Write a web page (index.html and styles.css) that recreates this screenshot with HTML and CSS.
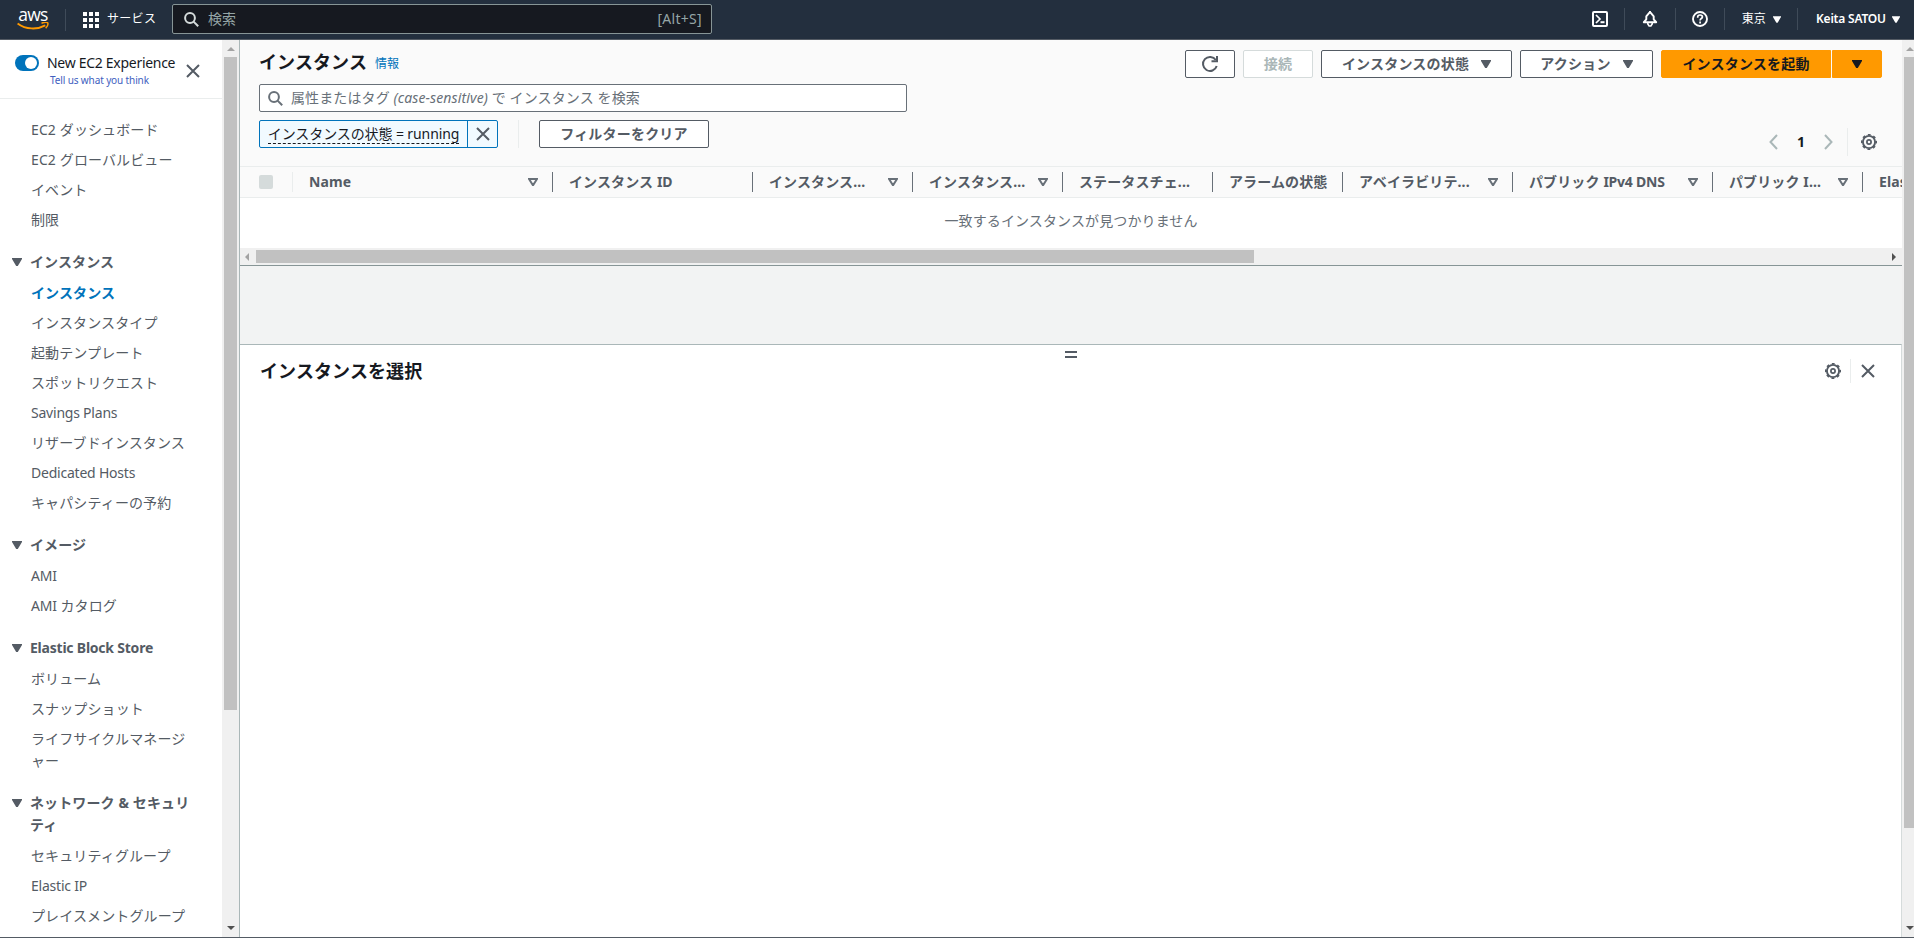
FILE: index.html
```html
<!DOCTYPE html>
<html lang="ja">
<head>
<meta charset="utf-8">
<title>インスタンス | EC2</title>
<link rel="stylesheet" href="styles.css">
</head>
<body>
<svg class="defs" width="0" height="0">
  <symbol id="gear" viewBox="0 0 16 16"><g fill="none" stroke="currentColor" stroke-width="1.9"><circle cx="8" cy="8" r="6.1"/><circle cx="8" cy="8" r="2.1" stroke-width="1.7"/></g><circle cx="8" cy="8" r="7.3" fill="none" stroke="currentColor" stroke-width="1.5" stroke-dasharray="2.87 2.87" stroke-dashoffset="1.43"/></symbol>
  <symbol id="close" viewBox="0 0 14 14"><path d="M1 1l12 12M13 1L1 13" fill="none" stroke="currentColor" stroke-width="2"/></symbol>
  <symbol id="search" viewBox="0 0 15 15"><circle cx="6" cy="6" r="4.9" fill="none" stroke="currentColor" stroke-width="2"/><path d="M9.6 9.6l4.6 4.6" stroke="currentColor" stroke-width="2"/></symbol>
  <symbol id="down" viewBox="0 0 10 8"><path d="M0 0h10v1L5.8 8H4.2L0 1z" fill="currentColor"/></symbol>
  <symbol id="filter" viewBox="0 0 10 8"><path d="M1 1h8L5.2 7h-.4z" fill="none" stroke="currentColor" stroke-width="2"/></symbol>
</svg>
<header class="topbar">
  <a class="logo">
    <span class="logo-text">aws</span>
    <svg class="smile" viewBox="0 0 32 9"><path d="M.6 1.4C9 7.6 20 7.900 28.300 3.300" fill="none" stroke="#f90" stroke-width="1.9"/><path d="M24.500 1.200C27 .2 30 .1 30.700.8c.5 1-.3 3.600-2 5.400" fill="none" stroke="#f90" stroke-width="1.500"/></svg>
  </a>
  <i class="sep"></i>
  <a class="services"><svg width="16" height="16" viewBox="0 0 16 16"><path fill="#fff" d="M0 0h4v4H0zM6 0h4v4H6zM12 0h4v4h-4zM0 6h4v4H0zM6 6h4v4H6zM12 6h4v4h-4zM0 12h4v4H0zM6 12h4v4H6zM12 12h4v4h-4z"/></svg><span>サービス</span></a>
  <div class="topsearch"><svg width="15" height="15"><use href="#search"/></svg><span class="ph">検索</span><span class="key">[Alt+S]</span></div>
  <div class="topright">
    <span class="ticon shell"><svg width="16" height="16" viewBox="0 0 16 16" fill="none" stroke="#fff" stroke-width="2"><rect x="1" y="1" width="14" height="14" rx="1"/><path d="M4 4l4 4-4 4" stroke-width="1.700"/><path d="M8.500 11.200h4"/></svg></span>
    <i class="sep"></i>
    <span class="ticon bell"><svg width="16" height="16" viewBox="0 0 16 16" fill="none" stroke="#fff" stroke-width="1.900"><path d="M7.200 1.800L4.300 5.300v3L1.800 11.200h12.400L11.700 8.300v-3L8.800 1.800z" stroke-linejoin="round"/><path d="M8 0v2"/><path d="M5.800 12v1l1.300 2h1.800l1.300-2v-1" stroke-width="1.600"/></svg></span>
    <i class="sep"></i>
    <span class="ticon help"><svg width="16" height="16" viewBox="0 0 16 16" fill="none" stroke="#fff" stroke-width="1.900"><circle cx="8" cy="8" r="7"/><path d="M5.700 6.700V5.900C5.700 4.700 6.700 4 8 4s2.400.8 2.400 2c0 1.600-2.300 1.500-2.300 3.400M8.100 10.500v2" stroke-width="1.700"/></svg></span>
    <i class="sep"></i>
    <span class="region">東京<svg width="8" height="7"><use href="#down"/></svg></span>
    <i class="sep"></i>
    <span class="user"><b>Keita SATOU</b><svg width="8" height="7"><use href="#down"/></svg></span>
  </div>
</header>
<div class="shell-body">
  <aside class="side">
    <div class="side-content">
      <div class="exp">
        <span class="toggle"></span>
        <div class="exp-text"><span class="exp-title">New EC2 Experience</span><a class="exp-link">Tell us what you think</a></div>
        <svg class="exp-close" width="14" height="14"><use href="#close"/></svg>
      </div>
      <nav class="nav">
        <ul><li>EC2 ダッシュボード</li><li>EC2 グローバルビュー</li><li>イベント</li><li>制限</li></ul>
        <h3><svg width="10" height="8"><use href="#down"/></svg><span>インスタンス</span></h3>
        <ul><li class="on">インスタンス</li><li>インスタンスタイプ</li><li>起動テンプレート</li><li>スポットリクエスト</li><li class="latin">Savings Plans</li><li>リザーブドインスタンス</li><li class="latin">Dedicated Hosts</li><li>キャパシティーの予約</li></ul>
        <h3><svg width="10" height="8"><use href="#down"/></svg><span>イメージ</span></h3>
        <ul><li class="latin">AMI</li><li><span class="latin">AMI</span> カタログ</li></ul>
        <h3><svg width="10" height="8"><use href="#down"/></svg><span class="latin">Elastic Block Store</span></h3>
        <ul><li>ボリューム</li><li>スナップショット</li><li>ライフサイクルマネージ<br>ャー</li></ul>
        <h3><svg width="10" height="8"><use href="#down"/></svg><span>ネットワーク &amp; セキュリ<br>ティ</span></h3>
        <ul><li>セキュリティグループ</li><li class="latin">Elastic IP</li><li>プレイスメントグループ</li></ul>
      </nav>
    </div>
    <div class="vbar"><i class="up"></i><i class="thumb left-thumb"></i><i class="dn"></i></div>
  </aside>
  <main class="main">
    <section class="panel">
      <div class="title-row">
        <h1>インスタンス</h1><a class="info">情報</a>
        <div class="actions">
          <button class="btn refresh"><svg width="18" height="18" viewBox="0 0 18 18" fill="none" stroke="currentColor" stroke-width="2"><path d="M15.700 11A7 7 0 1 1 14.800 5"/><path d="M16 1v5.200h-5.500"/></svg></button>
          <button class="btn off">接続</button>
          <button class="btn state">インスタンスの状態<svg width="10" height="8"><use href="#down"/></svg></button>
          <button class="btn act">アクション<svg width="10" height="8"><use href="#down"/></svg></button>
          <div class="split"><button class="btn launch">インスタンスを起動</button><button class="btn more"><svg width="10" height="8"><use href="#down"/></svg></button></div>
        </div>
      </div>
      <div class="search"><svg width="15" height="15"><use href="#search"/></svg><span>属性またはタグ <em>(case-sensitive)</em> で インスタンス を検索</span></div>
      <div class="filter-row">
        <div class="chip"><div class="chip-label"><span>インスタンスの状態 = running</span></div><div class="chip-x"><svg width="14" height="14"><use href="#close"/></svg></div></div>
        <i class="rule"></i>
        <button class="btn clear">フィルターをクリア</button>
        <div class="pager"><svg width="9" height="16" viewBox="0 0 9 16"><path d="M8 1L1.500 8 8 15" fill="none" stroke="#aab7b8" stroke-width="2"/></svg><b>1</b><svg width="9" height="16" viewBox="0 0 9 16"><path d="M1 1l6.500 7L1 15" fill="none" stroke="#aab7b8" stroke-width="2"/></svg><i class="rule"></i><svg class="gear" width="16" height="16"><use href="#gear"/></svg></div>
      </div>
      <div class="thead">
        <div class="th check"><i></i></div>
        <div class="th name"><span>Name</span><svg width="10" height="8"><use href="#filter"/></svg></div>
        <div class="th w200"><span>インスタンス <span class="latin">ID</span></span></div>
        <div class="th w160"><span>インスタンス...</span><svg width="10" height="8"><use href="#filter"/></svg></div>
        <div class="th w150"><span>インスタンス...</span><svg width="10" height="8"><use href="#filter"/></svg></div>
        <div class="th w150"><span>ステータスチェ...</span></div>
        <div class="th w130"><span>アラームの状態</span></div>
        <div class="th w170"><span>アベイラビリテ...</span><svg width="10" height="8"><use href="#filter"/></svg></div>
        <div class="th w200"><span>パブリック <span class="latin">IPv4 DNS</span></span><svg width="10" height="8"><use href="#filter"/></svg></div>
        <div class="th w150"><span>パブリック I...</span><svg width="10" height="8"><use href="#filter"/></svg></div>
        <div class="th last"><span>Elastic IP</span></div>
      </div>
      <div class="empty">一致するインスタンスが見つかりません</div>
      <div class="hbar"><i class="lt"></i><i class="hthumb"></i><i class="rt"></i></div>
    </section>
    <div class="gap"></div>
    <section class="detail">
      <i class="grip"></i>
      <div class="detail-head"><h2>インスタンスを選択</h2><svg width="16" height="16"><use href="#gear"/></svg><i class="rule"></i><svg width="14" height="14"><use href="#close"/></svg></div>
    </section>
  </main>
  <div class="vbar page-bar"><i class="up"></i><i class="thumb page-thumb"></i><i class="dn"></i></div>
</div>
</body>
</html>
```
FILE: styles.css
```css
* { box-sizing: border-box; }
body { margin: 0; width: 1914px; height: 938px; overflow: hidden; display: flex; flex-direction: column; font: 14px/22px "Noto Sans", "Noto Sans CJK JP", sans-serif; letter-spacing: .12px; color: #545b64; background: #fff; border-bottom: 1px solid #545b64; }
.defs { position: absolute; }
svg { display: block; flex: none; }
h1, h2, h3, ul { margin: 0; padding: 0; }
ul { list-style: none; }
i { flex: none; }
.latin { letter-spacing: -.22px; }

.topbar { flex: none; height: 40px; background: #232f3e; border-bottom: 1px solid #545b64; display: flex; align-items: center; color: #fff; font-size: 12px; }
.topbar .sep { width: 1px; height: 22px; background: #3f4b59; }
.logo { width: 32px; height: 22px; margin: 0 16px 0 17px; display: flex; flex-direction: column; align-items: center; }
.logo-text { font: 500 17.5px/11px "Open Sans", sans-serif; letter-spacing: -.7px; height: 13px; }
.smile { width: 32px; height: 9px; }
.services { display: flex; align-items: center; gap: 8px; margin-left: 17px; width: 89px; white-space: nowrap; letter-spacing: .3px; }
.services span { margin-top: -2px; }
.topsearch { width: 540px; height: 30px; margin-top: -1px; border: 1px solid #879596; border-radius: 2px; background: #161920; display: flex; align-items: center; padding: 0 9px 0 11px; color: #95a5a6; font-size: 14px; }
.topsearch svg { color: #d5dbdb; margin-right: 9px; }
.topsearch .key { margin-left: auto; letter-spacing: .3px; }
.topright { margin-left: auto; display: flex; align-items: center; margin-top: -1px; }
.shell { margin-right: 16px; }
.bell { margin: 0 17px; }
.help { margin: 0 16px; }
.region { display: flex; align-items: center; gap: 7px; padding: 0 16px 0 17px; }
.user { display: flex; align-items: center; gap: 7px; padding: 0 14px 0 18px; }
.user b { font-weight: 600; width: 69px; white-space: nowrap; letter-spacing: -.2px; }

.shell-body { flex: 1; display: flex; min-height: 0; }
.side { width: 240px; flex: none; display: flex; border-right: 1px solid #aab7b8; }
.side-content { width: 222px; overflow: hidden; }
.exp { height: 59px; border-bottom: 1px solid #eaeded; display: flex; padding: 12px 0 0 15px; }
.toggle { width: 24px; height: 16px; margin-top: 3px; border-radius: 8px; background: #0073bb; display: flex; justify-content: flex-end; padding: 2px; }
.toggle::after { content: ""; width: 12px; height: 12px; border-radius: 50%; background: #fff; }
.exp-text { width: 139px; padding-left: 8px; display: flex; flex-direction: column; white-space: nowrap; }
.exp-title { color: #16191f; letter-spacing: -.29px; }
.exp-link { color: #4060c0; font-size: 10px; line-height: 13px; padding-left: 3px; letter-spacing: -.12px; }
.exp-close { margin: 12px 0 0 8px; }
.nav { padding-top: 20px; white-space: nowrap; }
.nav li { padding-left: 31px; margin-bottom: 8px; }
.nav h3 { display: flex; font-size: 14px; line-height: 22px; padding-left: 12px; margin: 20px 0 9px; }
.nav h3 svg { margin: 7px 8px 0 0; }
.nav .on { color: #0073bb; font-weight: 700; }

.vbar { width: 17px; background: #f0f0f0; display: flex; flex-direction: column; align-items: center; }
.vbar .up, .vbar .dn { width: 0; height: 0; border: 4px solid transparent; border-top: 0; border-bottom-color: #a3a3a3; margin: 7px 0 6px; }
.vbar .dn { border: 4px solid transparent; border-bottom: 0; border-top-color: #505050; margin: auto 0 7px; }
.thumb { width: 13px; background: #c1c1c1; }
.left-thumb { height: 653px; }
.page-bar { width: 12px; flex: none; align-items: flex-end; overflow: hidden; }
.page-bar .thumb { width: 10px; }
.page-thumb { height: 771px; }

.main { flex: 1; min-width: 0; display: flex; flex-direction: column; overflow: hidden; }
.panel { flex: none; background: #fafafa; display: flex; flex-direction: column; border-bottom: 1px solid #879596; }
.title-row { height: 38px; display: flex; align-items: flex-start; padding: 10px 20px 0 19px; }
h1 { font-size: 18px; line-height: 24px; color: #16191f; }
.info { font-size: 12px; color: #0073bb; margin: 3px 0 0 8px; }
.actions { margin-left: auto; display: flex; gap: 8px; }
.btn { height: 28px; border: 1px solid #545b64; border-radius: 2px; background: #fff; color: #545b64; font: 700 14px/20px "Noto Sans", "Noto Sans CJK JP", sans-serif; letter-spacing: .2px; padding: 0; display: flex; align-items: center; justify-content: center; white-space: nowrap; }
.refresh { width: 50px; }
.off { width: 70px; color: #aab7b8; border-color: #d5dbdb; }
.state { width: 191px; gap: 12px; }
.act { width: 133px; gap: 12px; }
.split { display: flex; gap: 1px; }
.split .btn { background: #f90; border-color: #f90; color: #16191f; }
.split .launch { width: 170px; border-radius: 2px 0 0 2px; }
.split .more { width: 50px; border-radius: 0 2px 2px 0; }
.search { margin: 6px 0 0 19px; width: 648px; height: 28px; border: 1px solid #687078; border-radius: 2px; background: #fff; display: flex; align-items: center; padding-left: 8px; gap: 8px; color: #687078; }
.filter-row { display: flex; height: 54px; padding: 8px 25px 0 19px; }
.chip { width: 239px; height: 28px; border: 1px solid #0073bb; border-radius: 2px; background: #f1faff; color: #16191f; display: flex; }
.chip-label { width: 208px; display: flex; align-items: center; justify-content: center; }
.chip-label span { border-bottom: 1px dashed #16191f; line-height: 18px; white-space: nowrap; letter-spacing: -.1px; }
.chip-x { width: 30px; border-left: 1px solid #0073bb; display: flex; align-items: center; justify-content: center; color: #545b64; }
.rule { width: 1px; height: 28px; background: #eaeded; }
.filter-row > .rule { margin: 0 20px; }
.clear { width: 170px; }
.pager { margin-left: auto; display: flex; align-items: center; height: 28px; margin-top: 8px; color: #16191f; }
.pager b { width: 46px; text-align: center; }
.pager .rule { margin: 0 13px 0 14px; }
.gear { color: #545b64; }

.thead { height: 32px; border-top: 1px solid #eaeded; border-bottom: 1px solid #eaeded; display: flex; align-items: center; font-weight: 700; overflow: hidden; white-space: nowrap; }
.th { flex: none; height: 20px; border-right: 1px solid #687078; display: flex; align-items: center; justify-content: space-between; padding: 0 14px 0 16px; }
.th svg { color: #687078; }
.check { width: 53px; border-color: #eaeded; padding-left: 19px; }
.check i { width: 14px; height: 14px; border-radius: 2px; background: #d5dbdb; }
.name { width: 260px; }
.w130 { width: 130px; } .w150 { width: 150px; } .w160 { width: 160px; } .w170 { width: 170px; } .w200 { width: 200px; }
.last { border: 0; }
.empty { height: 50px; background: #fff; color: #687078; text-align: center; line-height: 46px; }
.hbar { height: 17px; background: #f0f0f0; display: flex; align-items: center; }
.lt, .rt { border: 4px solid transparent; border-left: 0; border-right-color: #a3a3a3; margin: 0 7px 0 5px; }
.hthumb { width: 998px; height: 13px; background: #c1c1c1; }
.rt { border: 4px solid transparent; border-right: 0; border-left-color: #505050; margin: 0 6px 0 auto; }
.gap { flex: none; height: 78px; background: #f2f3f3; }
.detail { flex: 1; border-top: 1px solid #aab7b8; border-right: 1px solid #d5dbdb; background: #fff; }
.grip { display: block; width: 12px; height: 7px; margin: 6px auto 0; border-top: 2px solid #545b64; border-bottom: 2px solid #545b64; }
.detail-head { display: flex; align-items: center; padding: 0 26px 0 20px; height: 25px; }
.detail-head .rule { height: 24px; margin: 0 10px 0 9px; }
h2 { font-size: 18px; line-height: 24px; color: #16191f; margin-right: auto; }
```
